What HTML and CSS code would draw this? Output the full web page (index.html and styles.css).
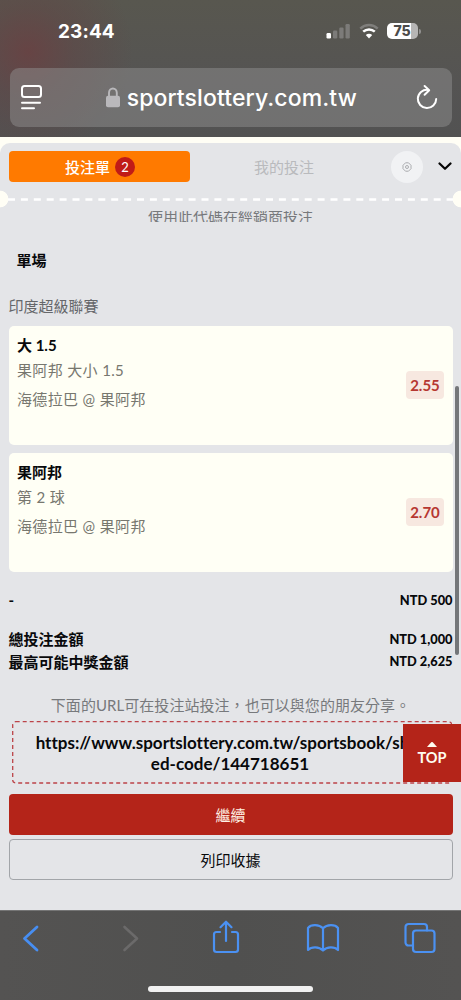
FILE: index.html
```html
<!DOCTYPE html>
<html lang="zh-Hant">
<head>
<meta charset="utf-8">
<meta name="viewport" content="width=device-width, initial-scale=1">
<title>投注單</title>
<link rel="stylesheet" href="styles.css">
</head>
<body>
<div class="phone">
  <header class="chrome-top">
    <div class="status">
      <span class="time">23:44</span>
      <div class="status-icons">
        <svg class="signal" width="25" height="16" viewBox="0 0 25 16"><rect x="0.5" y="10" width="4.5" height="5.5" rx="1.2" fill="#fff"/><rect x="7" y="7.5" width="4.3" height="8" rx="1.2" fill="#7c7b79"/><rect x="13.3" y="4.5" width="4.3" height="11" rx="1.2" fill="#7c7b79"/><rect x="19.5" y="1" width="4.3" height="14.500" rx="1.2" fill="#7c7b79"/></svg>
        <svg class="wifi" width="20" height="16" viewBox="0 0 20 16" fill="none"><path d="M1.300 5.600C6.300.9 13.700.9 18.700 5.600" stroke="#7f7e7b" stroke-width="2.500"/><path d="M4.200 8.700c3.400-3.100 8.200-3.100 11.600 0" stroke="#fff" stroke-width="2.500"/><path d="M10 15.400 6.800 12.100c1.800-1.700 4.600-1.700 6.400 0z" fill="#fff"/></svg>
        <div class="battery"><span>75</span></div>
        <i class="battery-cap"></i>
      </div>
    </div>
    <div class="address">
      <svg class="reader" width="24" height="27" viewBox="0 0 24 27" fill="none" stroke="#fff" stroke-width="2" stroke-linecap="round"><rect x="2" y="2" width="19" height="11" rx="2.500"/><path d="M2 18.800h18M2 24.200h12"/></svg>
      <div class="host">
        <svg width="16" height="21" viewBox="0 0 16 21"><path d="M4 9V5.800a3.900 4.300 0 0 1 7.800 0V9" fill="none" stroke="#b9b8bb" stroke-width="1.900"/><rect x="1" y="8.700" width="14" height="11.500" rx="2" fill="#b9b8bb"/></svg>
        <span>sportslottery.com.tw</span>
      </div>
      <svg class="reload" width="24" height="28" viewBox="0 0 24 28" fill="none" stroke="#fff" stroke-width="2" stroke-linecap="round" stroke-linejoin="round"><path d="M12.800 5.700A9.200 9.200 0 1 0 21.200 15M9.600 2l4.600 4.200-4.600 4.500"/></svg>
    </div>
  </header>

  <main class="page">
    <div class="slip">
      <nav class="tabs">
        <div class="tab active">投注單<span class="count">2</span></div>
        <div class="tab">我的投注</div>
        <div class="gear"><svg width="10" height="10" viewBox="0 0 10 10" fill="none" stroke="#9b9ca0" stroke-width=".8"><path d="M3.500.8h3l2.500 2.500v3.400L6.500 9.200h-3L1 6.700V3.300z"/><circle cx="5" cy="5" r="1.500"/></svg></div>
        <svg class="chevron" width="14" height="9" viewBox="0 0 14 9" fill="none" stroke="#050505" stroke-width="2.200" stroke-linecap="round" stroke-linejoin="round"><path d="m1.500 1.500 5.500 5.300 5.500-5.300"/></svg>
      </nav>
      <div class="perforation"><svg width="461" height="3" viewBox="0 0 461 3"><path d="M8 1.500H453" stroke="#fff" stroke-width="2.300" stroke-dasharray="7 5.900"/></svg></div>
      <div class="scroll-edge"><span>使用此代碼在經銷商投注</span></div>
      <h1 class="kind">單場</h1>
      <h2 class="league">印度超級聯賽</h2>

      <div class="bets">
        <article class="bet">
          <div class="details"><strong>大 1.5</strong><span>果阿邦 大小 1.5</span><span class="match">海德拉巴 @ 果阿邦</span></div>
          <div class="odds">2.55</div>
        </article>
        <article class="bet">
          <div class="details"><strong>果阿邦</strong><span>第 2 球</span><span class="match">海德拉巴 @ 果阿邦</span></div>
          <div class="odds">2.70</div>
        </article>
      </div>

      <div class="row single"><span>-</span><b>NTD 500</b></div>
      <div class="row"><span>總投注金額</span><b>NTD 1,000</b></div>
      <div class="row"><span>最高可能中獎金額</span><b>NTD 2,625</b></div>

      <p class="share">下面的URL可在投注站投注，也可以與您的朋友分享。</p>
      <div class="link-box">
        <svg class="dashes" width="441" height="63" viewBox="0 0 441 63"><rect x=".7" y=".7" width="439" height="61.300" rx="3" fill="none" stroke="#bc4348" stroke-width="1.300" stroke-dasharray="4 3"/></svg>
        <div class="url">https://www.sportslottery.com.tw/sportsbook/shar<br>ed-code/144718651</div>
      </div>
      <div class="button primary">繼續</div>
      <div class="button secondary">列印收據</div>
    </div>
    <i class="scrollbar"></i>
    <div class="to-top"><svg width="10" height="6" viewBox="0 0 10 6"><path d="m0 6 4.200-4.700q.8-.8 1.600 0L10 6z" fill="#fffdf0"/></svg><span>TOP</span></div>
  </main>

  <footer class="toolbar">
    <svg width="34" height="38" viewBox="0 0 34 38" stroke="#478ef2" stroke-width="2.800"><path d="M23 8 10.500 19.500 23 31"/></svg>
    <svg width="34" height="38" viewBox="0 0 34 38" stroke="#6b6a6a" stroke-width="2.600"><path d="M13.500 8 26 19.500 13.500 31"/></svg>
    <svg width="34" height="38" viewBox="0 0 34 38" stroke="#4b91f2"><path d="M11 13H7.500a2.500 2.500 0 0 0-2.500 2.500v15A2.500 2.500 0 0 0 7.500 33h19a2.500 2.500 0 0 0 2.500-2.500v-15a2.500 2.500 0 0 0-2.500-2.500H23M17 22V3M11.500 8.200 17 2.700l5.500 5.500"/></svg>
    <svg width="34" height="38" viewBox="0 0 34 38" stroke="#4b91f2"><path d="M17 9.300C13 5.200 5 5.200 2 9v22c3.500-3.500 11-3.500 15 .5 4-4 11.500-4 15-.5V9c-3-3.800-11-3.800-15 .3v22"/></svg>
    <svg width="34" height="38" viewBox="0 0 34 38" stroke="#4b91f2"><path d="M9 26.500H5.500A3 3 0 0 1 2.500 23.500V8a3 3 0 0 1 3-3H21a3 3 0 0 1 3 3v3.500"/><rect x="10" y="11.500" width="21.500" height="21.500" rx="3"/></svg>
    <i class="home-bar"></i>
  </footer>
</div>
</body>
</html>
```

FILE: styles.css
```css
* { box-sizing: border-box; }
body { margin: 0; font-family: Lato, "Noto Sans CJK TC", sans-serif; font-size: 15px; color: #08090b; font-variant-ligatures: none; }
svg { display: block; flex: none; }
.phone { width: 461px; height: 1000px; display: flex; flex-direction: column; overflow: hidden; }

.chrome-top { height: 137px; flex: none; padding: 0 9.500px 0 10px; background: radial-gradient(circle at 28px 52px, rgba(108, 62, 64, .75), rgba(100, 64, 65, .4) 45px, transparent 105px), linear-gradient(#58574f, #555453 60%, #525252); font-family: Inter, sans-serif; color: #fff; }
.status { height: 68px; display: flex; justify-content: space-between; padding: 21px 31px 0 48px; }
.time { font-size: 19px; line-height: 22px; font-weight: 700; letter-spacing: .1px; }
.status-icons { display: flex; height: 20px; align-items: center; }
.wifi { margin-left: 8px; }
.battery { width: 31px; height: 16px; margin-left: 8px; border-radius: 5px; background: linear-gradient(90deg, #fff 77%, #b6b5b4 77%); color: #4c4b4a; font-size: 14px; line-height: 16px; font-weight: 800; text-align: center; }
.battery-cap { width: 2px; height: 5px; margin-left: 1px; border-radius: 0 2px 2px 0; background: #929190; }
.address { height: 59px; display: flex; align-items: center; border-radius: 9px; background: rgba(146, 146, 146, .47); padding: 0 13px 0 10px; }
.host { flex: 1; display: flex; align-items: center; justify-content: center; gap: 6px; font-size: 23px; font-weight: 500; line-height: 32px; padding-left: 3px; }
.host span { letter-spacing: .1px; }

.page { height: 773px; flex: none; position: relative; background: #fffef5; padding-top: 6px; }
.slip { height: 767px; border-radius: 10px 10px 0 0; background: #e4e5e8; padding: 8px 8.500px 0; }
.tabs { height: 31px; display: flex; align-items: center; }
.tab { width: 181px; height: 31px; display: flex; align-items: center; justify-content: center; color: #b9babd; }
.tab.active { padding-left: 2px; border-radius: 4px; background: #ff7a00; color: #fff; font-weight: 500; }
.tab + .tab { padding-left: 8px; }
.count { width: 20px; height: 20px; margin-left: 5px; border-radius: 50%; background: #c01b17; font-size: 13px; line-height: 20px; text-align: center; font-weight: 400; }
.gear { width: 32px; height: 32px; margin-left: 20px; border-radius: 50%; background: #f1f2f4; display: flex; align-items: center; justify-content: center; }
.chevron { margin-left: 15px; }
.perforation { height: 18px; margin: 8px -8.500px 0; display: flex; align-items: center; background: radial-gradient(circle at 0 50%, #fffef5 8px, transparent 8.700px), radial-gradient(circle at 100% 50%, #fffef5 8px, transparent 8.700px); }
.scroll-edge { height: 11px; margin-top: 3px; overflow: hidden; display: flex; justify-content: center; align-items: center; color: #77797c; }
.scroll-edge span { line-height: 22px; flex: none; padding-bottom: 2px; }
.kind { margin: 26px 0 0 8px; font-size: 15px; line-height: 24px; font-weight: 700; }
.league { margin: 22px 0 0; font-size: 15px; line-height: 24px; font-weight: 400; color: #65676a; }
.bets { display: flex; flex-direction: column; gap: 8.500px; margin-top: 8px; }
.bet { height: 118.500px; padding: 7px 8.500px 0; border-radius: 5px; background: #fffff5; display: flex; justify-content: space-between; }
.details { display: flex; flex-direction: column; color: #77776f; }
.details strong { line-height: 24px; font-weight: 700; color: #08090b; }
.details span { line-height: 24px; letter-spacing: .35px; margin-top: 1px; }
.details .match { margin-top: 5px; }
.odds { width: 38px; height: 28px; margin-top: 38px; border-radius: 4px; background: #f7e8e0; color: #b63731; font-size: 15px; font-weight: 700; line-height: 28px; text-align: center; }
.row { height: 22.500px; display: flex; align-items: center; justify-content: space-between; font-weight: 700; }
.row b { font-size: 12.800px; }
.single { height: 23px; margin: 17px 0 16px; }
.share { margin: 20px 0 0; line-height: 24px; text-align: center; letter-spacing: .05px; color: #77797c; }
.link-box { height: 63px; width: 441px; margin: 4px 0 0 3.500px; position: relative; }
.dashes { position: absolute; inset: 0; }
.url { width: 436px; padding-top: 11px; line-height: 21px; font-size: 17px; font-weight: 700; text-align: center; white-space: nowrap; }
.button { height: 41px; border-radius: 4px; display: flex; align-items: center; justify-content: center; }
.primary { margin-top: 10px; background: #b42419; color: #fff1e4; }
.secondary { margin-top: 4px; border: 1px solid #a2a5a9; }
.scrollbar { position: absolute; left: 454.500px; top: 249px; width: 4px; height: 269px; border-radius: 2px; background: #747679; }
.to-top { position: absolute; right: 0; top: 587px; width: 58px; height: 58px; background: #b42419; color: #fffdf0; display: flex; flex-direction: column; align-items: center; padding-top: 17px; font-weight: 700; font-size: 14.500px; line-height: 22px; }

.toolbar { height: 90px; flex: none; position: relative; border-top: 1px solid #757575; background: linear-gradient(90deg, #545352, #50504f 50%, #545352); display: flex; justify-content: space-between; padding: 8px 24px 0 14px; }
.toolbar svg { fill: none; stroke-linecap: round; stroke-linejoin: round; }
.toolbar svg:nth-of-type(n+3) { stroke-width: 2.200px; }
.home-bar { position: absolute; left: 148px; bottom: 8px; width: 165px; height: 6px; border-radius: 3px; background: #f1f1f1; }
```
